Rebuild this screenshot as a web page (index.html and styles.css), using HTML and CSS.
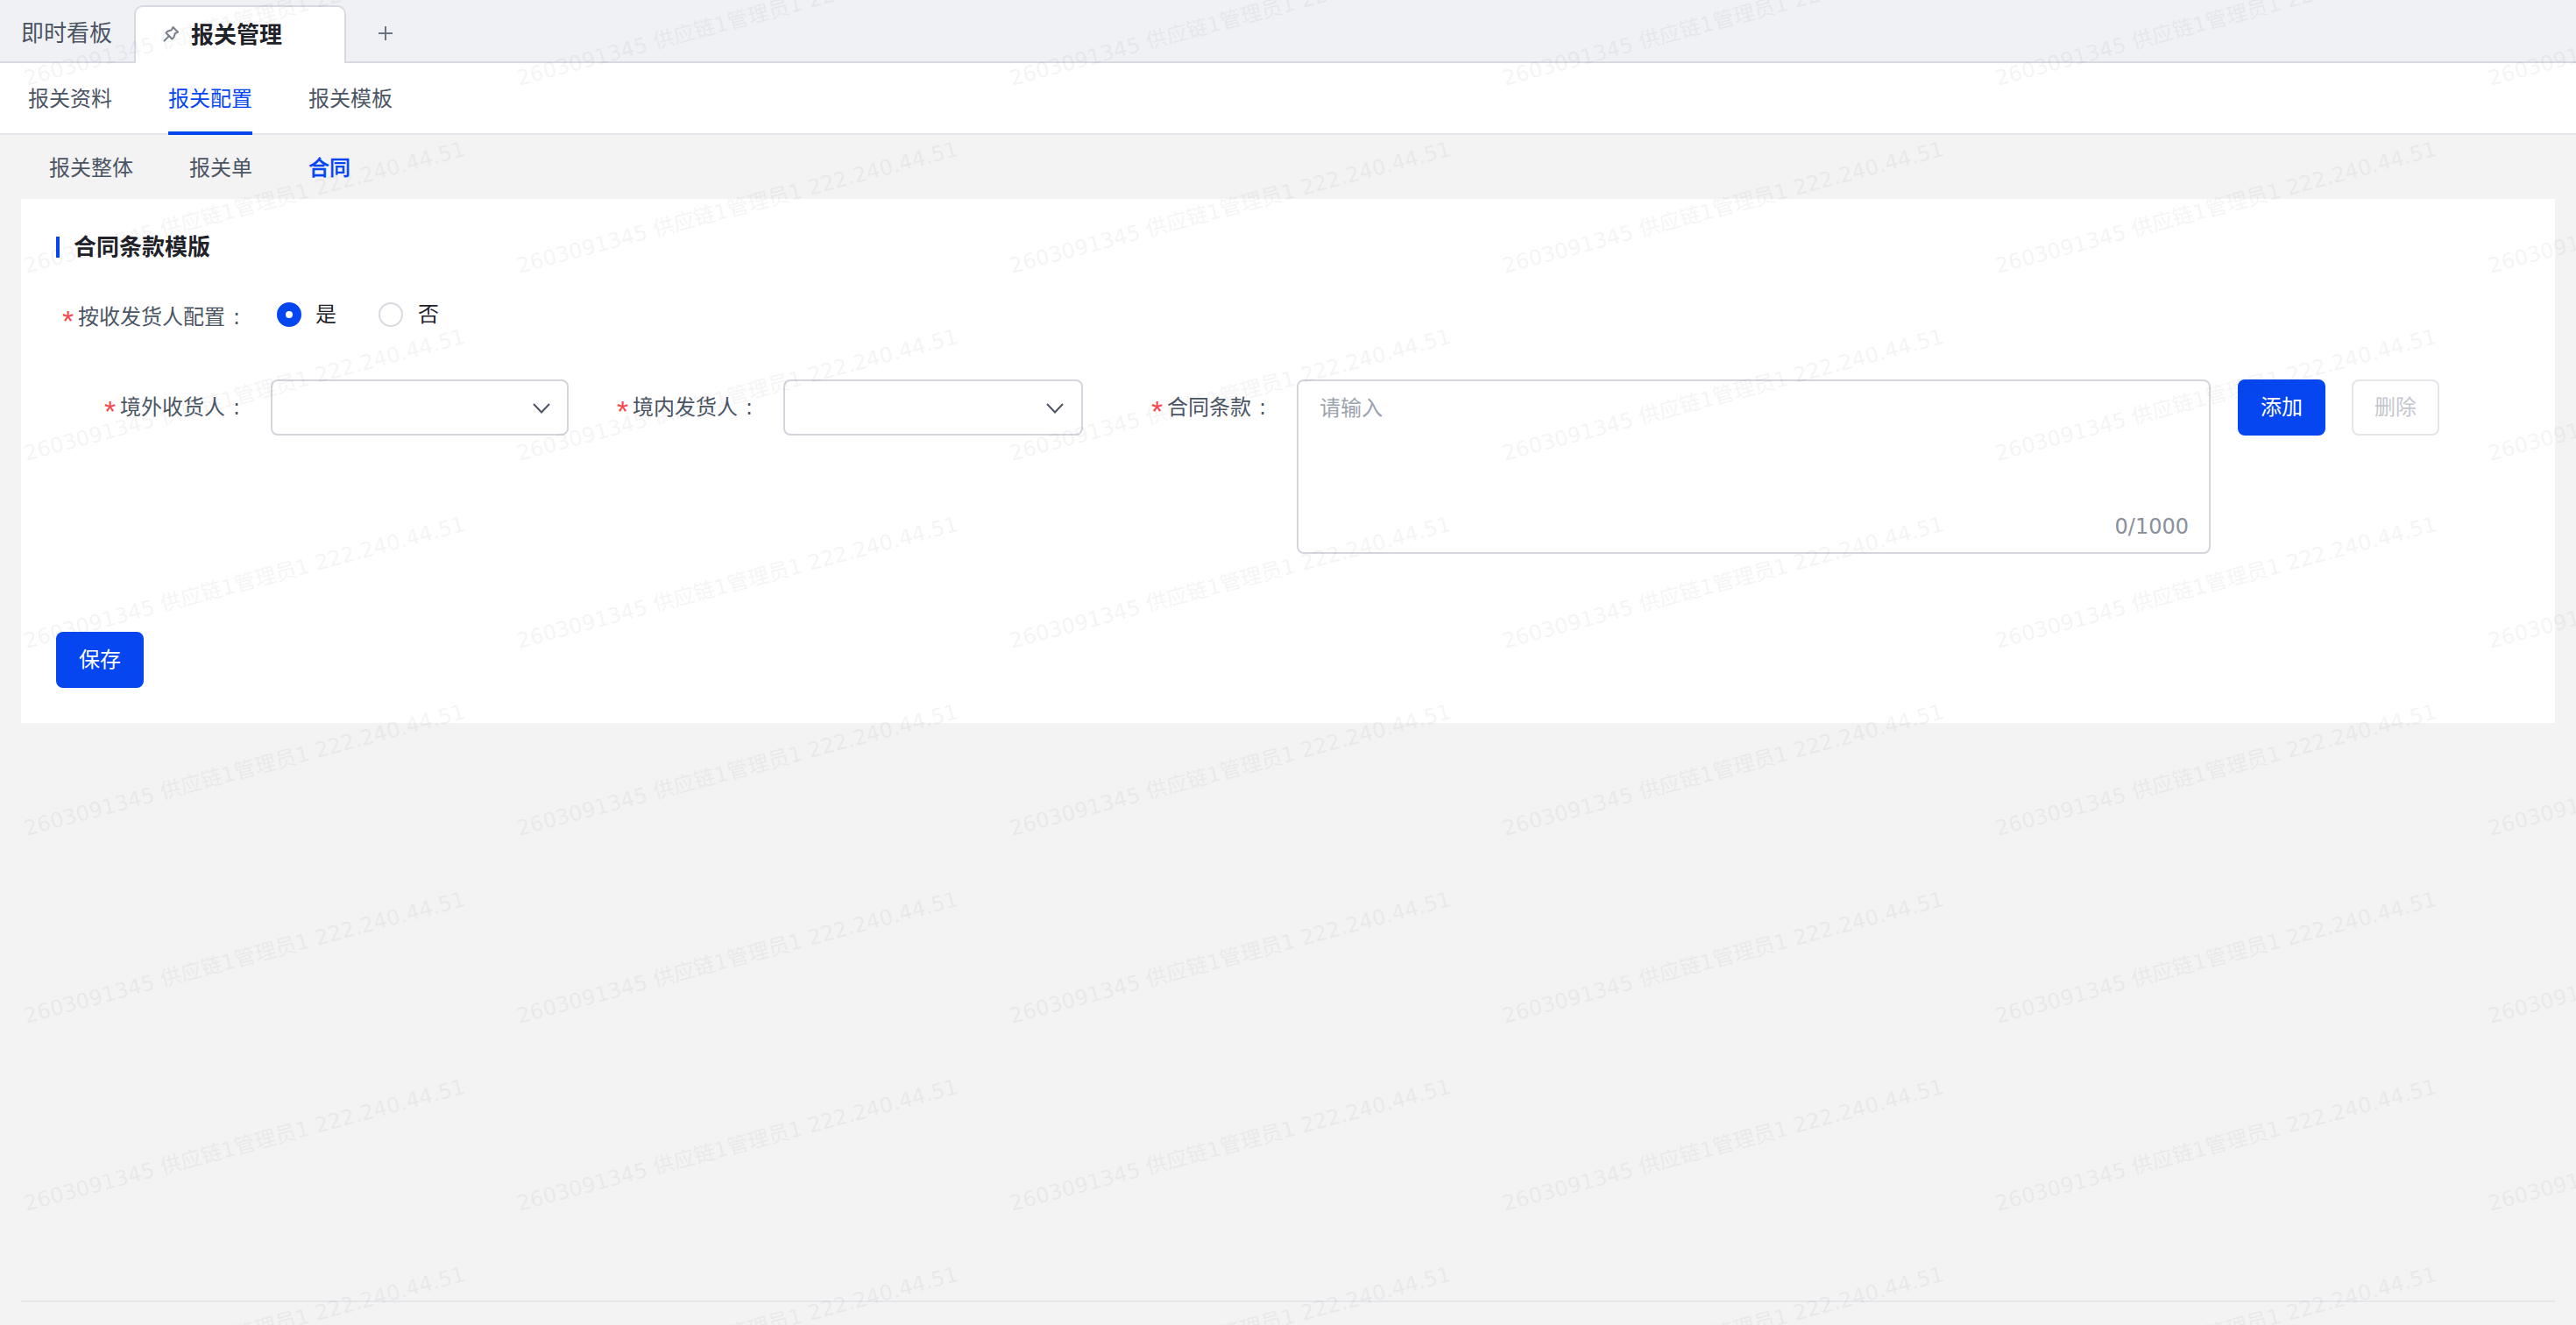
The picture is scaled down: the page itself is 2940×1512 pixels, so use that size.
FILE: index.html
```html
<!DOCTYPE html>
<html lang="zh-CN">
<head>
<meta charset="utf-8">
<title>报关管理</title>
<link rel="stylesheet" href="styles.css">
</head>
<body>
<div class="app">
  <header class="top-tabs">
    <span class="top-tab">即时看板</span>
    <div class="top-tab-active">
      <svg class="pin" viewBox="0 0 20 20" fill="none" stroke="#7a808c" stroke-width="2" stroke-linejoin="round" stroke-linecap="round"><path d="M12.500 2L18 7.500L14.800 9.200L13.200 13.800L11.500 15.500L4.500 8.500L6.200 6.800L10.800 5.200Z"/><path d="M7.500 12.500L2.500 17.500"/></svg>
      <span>报关管理</span>
    </div>
    <svg class="plus" viewBox="0 0 18 18" stroke="#6b7280" stroke-width="2"><path d="M9 1v16M1 9h16"/></svg>
  </header>
  <nav class="sub-tabs">
    <span class="sub-tab">报关资料</span>
    <span class="sub-tab is-active">报关配置</span>
    <span class="sub-tab">报关模板</span>
  </nav>
  <nav class="third-tabs">
    <span>报关整体</span>
    <span>报关单</span>
    <span class="third-active">合同</span>
  </nav>
  <main class="card">
    <h2 class="card-title">合同条款模版</h2>
    <div class="radio-row">
      <label class="label"><i class="star">*</i>按收发货人配置<b class="colon">:</b></label>
      <div class="radios">
        <span class="radio is-on"></span><span class="radio-text">是</span>
        <span class="radio"></span><span class="radio-text">否</span>
      </div>
    </div>
    <div class="form-row">
      <label class="label"><i class="star">*</i>境外收货人<b class="colon">:</b></label>
      <div class="select">
        <svg class="chev" viewBox="0 0 20 12" fill="none" stroke="#4b5563" stroke-width="2"><path d="M1 1l9 9.500L19 1"/></svg>
      </div>
      <label class="label"><i class="star">*</i>境内发货人<b class="colon">:</b></label>
      <div class="select select-b">
        <svg class="chev" viewBox="0 0 20 12" fill="none" stroke="#4b5563" stroke-width="2"><path d="M1 1l9 9.500L19 1"/></svg>
      </div>
      <label class="label label-c"><i class="star">*</i>合同条款<b class="colon">:</b></label>
      <div class="textarea">
        <span class="placeholder">请输入</span>
        <span class="count">0/1000</span>
      </div>
      <button class="btn btn-primary btn-add">添加</button>
      <button class="btn btn-disabled">删除</button>
    </div>
    <button class="btn btn-primary btn-save">保存</button>
  </main>
  <div class="footer-line"></div>
</div>
<svg class="watermark" width="2940" height="1512" aria-hidden="true">
  <defs>
    <pattern id="wm" x="0" y="-70" width="562.5" height="214" patternUnits="userSpaceOnUse">
      <text class="wm-text" transform="translate(30 168) rotate(-15)">2603091345 供应链1管理员1 222.240.44.51</text>
    </pattern>
  </defs>
  <rect width="2940" height="1512" fill="url(#wm)"/>
</svg>
</body>
</html>
```
FILE: styles.css
```css
* { box-sizing: border-box; }
html, body { margin: 0; height: 100%; }
body {
  width: 2940px;
  height: 1512px;
  overflow: hidden;
  position: relative;
  background: #f3f3f4;
  color: #4b5563;
  font-family: "DejaVu Sans", "Noto Sans CJK SC", sans-serif;
  font-size: 24px;
}
.app { height: 1512px; display: flex; flex-direction: column; }

.top-tabs {
  height: 72px;
  flex: none;
  display: flex;
  align-items: flex-end;
  background: #f0f1f5;
  border-bottom: 2px solid #d9d9e1;
}
.top-tab {
  width: 153px;
  padding-left: 24px;
  align-self: center;
  font-size: 26px;
  line-height: 36px;
  margin-top: 6px;
}
.top-tab-active {
  width: 242px;
  height: 66px;
  margin-bottom: -2px;
  padding: 0 0 6px 30px;
  display: flex;
  align-items: center;
  gap: 13px;
  background: #fff;
  border: 2px solid #d9d9e1;
  border-bottom: 0;
  border-radius: 10px 10px 0 0;
  font-size: 26px;
  font-weight: 700;
  color: #1f2329;
}
.pin { width: 20px; height: 20px; flex: none; margin-top: 4px; }
.plus { width: 18px; height: 18px; margin: 0 0 23px 36px; }

.sub-tabs {
  height: 82px;
  flex: none;
  display: flex;
  gap: 64px;
  padding-left: 32px;
  background: #fff;
  border-bottom: 2px solid #e5e5ea;
}
.sub-tab {
  height: 82px;
  line-height: 83px;
  white-space: nowrap;
}
.sub-tab.is-active {
  color: #0546f0;
  border-bottom: 4px solid #0546f0;
}

.third-tabs {
  height: 73px;
  flex: none;
  display: flex;
  gap: 64px;
  padding: 21px 0 0 56px;
  line-height: 34px;
}
.third-active { color: #0546f0; font-weight: 500; -webkit-text-stroke: 0.3px #0546f0; }

.card {
  margin: 0 24px;
  height: 598px;
  flex: none;
  background: #fff;
  padding: 43px 40px 0;
}
.card-title {
  margin: 0;
  height: 24px;
  line-height: 25px;
  padding-left: 17px;
  border-left: 4px solid #0546f0;
  font-size: 26px;
  font-weight: 700;
  color: #1f2329;
  text-indent: -1px;
}
.radio-row {
  display: flex;
  align-items: center;
  height: 64px;
  margin-top: 33px;
}
.radio-row .label { padding-top: 6px; }
.label {
  width: 245px;
  flex: none;
  padding-right: 35px;
  display: flex;
  justify-content: flex-end;
  align-items: center;
  white-space: nowrap;
  line-height: 34px;
}
.label-c { width: 244px; }
.star {
  color: #f5484f;
  font-style: normal;
  width: 18px;
  font-family: "Liberation Sans", sans-serif;
  font-size: 34px;
  line-height: 28px;
  margin-top: 8px;
}
.colon { font-weight: 400; margin-left: 9px; width: 8px; }

.radios { display: flex; align-items: center; padding-left: 7px; height: 64px; }
.radio {
  width: 28px;
  height: 28px;
  flex: none;
  border-radius: 50%;
  border: 2px solid #d9d9e1;
  background: #fff;
}
.radio.is-on {
  border: 10px solid #0546f0;
}
.radio-text {
  margin-left: 16px;
  width: 72px;
  color: #1f2329;
  line-height: 34px;
}
.radio-text:last-child { margin-left: 17px; }

.form-row {
  display: flex;
  align-items: flex-start;
  margin-top: 42px;
  height: 199px;
}
.form-row .label { height: 64px; }
.select {
  position: relative;
  width: 340px;
  height: 64px;
  flex: none;
  border: 2px solid #d4d5dd;
  border-radius: 8px;
  background: #fff;
}
.select-b { width: 342px; }
.chev {
  position: absolute;
  right: 19px;
  top: 25px;
  width: 20px;
  height: 12px;
}
.select-b .chev { right: 20px; }
.textarea {
  position: relative;
  width: 1043px;
  height: 199px;
  flex: none;
  border: 2px solid #d4d5dd;
  border-radius: 8px;
  padding: 14px 24px;
  background: #fff;
}
.placeholder { color: #9ca3af; line-height: 34px; display: block; }
.count {
  position: absolute;
  right: 23px;
  bottom: 12px;
  color: #8a919c;
  line-height: 34px;
}
.btn {
  width: 100px;
  height: 64px;
  flex: none;
  border-radius: 8px;
  font: inherit;
  line-height: 34px;
  padding: 0;
}
.btn-primary { background: #0546f0; color: #fff; border: 0; }
.btn-add { margin-left: 31px; }
.btn-disabled {
  margin-left: 30px;
  background: #fff;
  color: #c4c7ce;
  border: 2px solid #e5e5ea;
}
.btn-save { display: block; margin-top: 89px; }

.footer-line {
  margin: auto 24px 26px;
  height: 2px;
  background: #e5e5ea;
  flex: none;
}

.watermark {
  position: absolute;
  left: 0;
  top: 0;
  pointer-events: none;
  filter: blur(0.5px);
}
.wm-text {
  font-size: 24.1px;
  fill: rgba(40, 45, 60, 0.05);
  font-family: "DejaVu Sans", "Noto Sans CJK SC", sans-serif;
}
```
